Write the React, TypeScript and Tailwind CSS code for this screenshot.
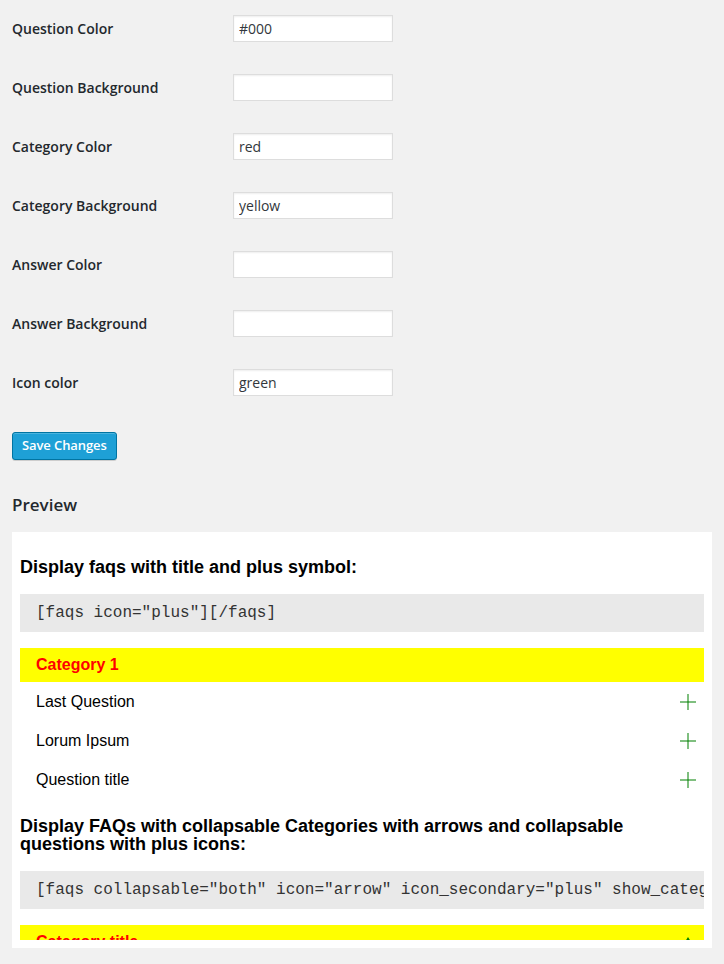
const fields = [
  { label: "Question Color", value: "#000" },
  { label: "Question Background", value: "" },
  { label: "Category Color", value: "red" },
  { label: "Category Background", value: "yellow" },
  { label: "Answer Color", value: "" },
  { label: "Answer Background", value: "" },
  { label: "Icon color", value: "green" },
];

const questions = ["Last Question", "Lorum Ipsum", "Question title"];

function Plus() {
  return (
    <span className="relative block h-4 w-4 shrink-0">
      <span className="absolute left-0 top-[7px] h-[2px] w-4 bg-[#008000]/50" />
      <span className="absolute left-[7px] top-0 h-4 w-[2px] bg-[#008000]/50" />
    </span>
  );
}

export default function App() {
  return (
    <div className="min-h-screen bg-[#f1f1f1] px-3 pt-[15px] pb-6 font-['Open_Sans',sans-serif] text-[#23282d]">
      <div className="flex flex-col gap-8">
        {fields.map((f) => (
          <div key={f.label} className="flex items-center">
            <label className="w-[221px] pb-px text-[14px] font-semibold">{f.label}</label>
            <input
              defaultValue={f.value}
              className="h-[27px] w-[160px] border border-[#ddd] bg-white px-[5px] text-[14px] text-[#32373c] shadow-[inset_0_1px_2px_rgba(0,0,0,0.07)] outline-none"
            />
          </div>
        ))}
      </div>

      <button className="mt-9 h-[28px] rounded-[3px] border border-[#0074a2] bg-[#1ea0d6] px-[9px] text-[13px] font-semibold tracking-[-0.1px] text-white shadow-[inset_0_1px_0_rgba(120,200,230,0.5),0_1px_0_rgba(0,0,0,0.15)]">
        Save Changes
      </button>

      <h2 className="mt-[33px] text-[17px] font-semibold leading-[23px]">Preview</h2>

      <div className="mt-4 bg-white p-2">
        <div className="h-[400px] overflow-hidden font-['Liberation_Sans',Arial,sans-serif] text-black">
          <h3 className="my-[18px] text-[18px] font-bold leading-[18px]">
            Display faqs with title and plus symbol:
          </h3>
          <div className="overflow-hidden whitespace-pre bg-[#e9e9e9] px-4 py-2 font-['Liberation_Mono',monospace] text-[16px] leading-[22px] text-[#333]">
            [faqs icon="plus"][/faqs]
          </div>

          <div className="mt-4 flex h-[34px] items-center bg-[#ffff00] pl-4 text-[16px] font-bold text-[#ff0000]">
            Category 1
          </div>
          {questions.map((q) => (
            <div key={q} className="flex h-[39px] items-center justify-between pl-4 pr-2 text-[16px]">
              <span>{q}</span>
              <Plus />
            </div>
          ))}

          <h3 className="my-[18px] text-[18px] font-bold leading-[18px]">
            Display FAQs with collapsable Categories with arrows and collapsable questions with plus icons:
          </h3>
          <div className="overflow-hidden whitespace-pre bg-[#e9e9e9] px-4 py-2 font-['Liberation_Mono',monospace] text-[16px] leading-[22px] text-[#333]">
            [faqs collapsable="both" icon="arrow" icon_secondary="plus" show_categories="true"][/faqs]
          </div>

          <div className="mt-4 flex h-[34px] items-center justify-between bg-[#ffff00] pl-4 pr-2 text-[16px] font-bold text-[#ff0000]">
            <span>Category title</span>
            <svg width="16" height="16" viewBox="0 0 16 16" className="shrink-0">
              <path d="M8 3 L13 11 L3 11 Z" fill="#008000" />
            </svg>
          </div>
        </div>
      </div>
    </div>
  );
}
